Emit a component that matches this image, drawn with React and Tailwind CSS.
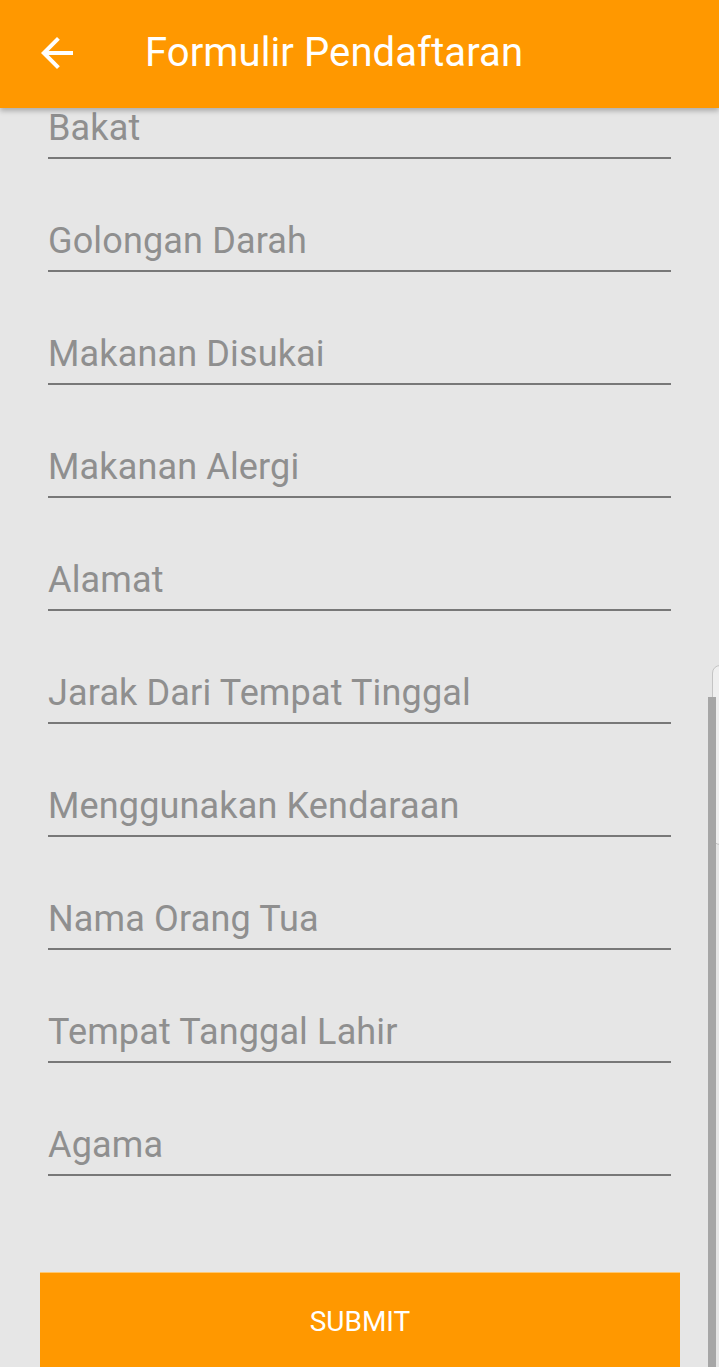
export default function App() {
  const fields = [
    "Bakat",
    "Golongan Darah",
    "Makanan Disukai",
    "Makanan Alergi",
    "Alamat",
    "Jarak Dari Tempat Tinggal",
    "Menggunakan Kendaraan",
    "Nama Orang Tua",
    "Tempat Tanggal Lahir",
    "Agama",
  ];
  return (
    <div
      className="relative w-[719px] h-[1367px] overflow-hidden bg-[#e6e6e6]"
      style={{ fontFamily: "Roboto, 'Noto Sans', sans-serif" }}
    >
      <header className="relative z-10 h-[108px] bg-[#ff9800] flex items-center shadow-[0_3px_5px_rgba(0,0,0,0.25)]">
        <svg
          viewBox="0 0 24 24"
          className="w-[48px] h-[48px] ml-[33px] mt-[-2px] fill-white"
        >
          <path d="M20 11H7.83l5.59-5.59L12 4l-8 8 8 8 1.41-1.41L7.83 13H20v-2z" />
        </svg>
        <h1 className="ml-[64px] text-white text-[40px] leading-none mt-[-2px] tracking-[0.1px]">
          Formulir Pendaftaran
        </h1>
      </header>
      <div className="mt-[-62px] flex flex-col">
        {fields.map((f) => (
          <div key={f} className="h-[113px] px-[48px] flex flex-col justify-end">
            <div className="border-b-2 border-[#787878] pb-[9px]">
              <span className="block text-[36px] leading-[40px] tracking-[0.15px] text-[#8f8f8f]">
                {f}
              </span>
            </div>
          </div>
        ))}
        <div className="mt-[96px] mx-[40px] mr-[39px]">
          <button className="w-full h-[110px] bg-[#ff9800] text-white text-[28px] pb-[12px] border-t border-[#ffc870]">
            SUBMIT
          </button>
        </div>
      </div>
      <div className="absolute left-[712px] top-[665px] w-[20px] h-[180px] rounded-l-[8px] border border-[#c4c4c4] bg-[#efefef]" />
      <div className="absolute left-[708px] top-[697px] w-[8px] h-[670px] bg-[#a6a6a6]" />
    </div>
  );
}
